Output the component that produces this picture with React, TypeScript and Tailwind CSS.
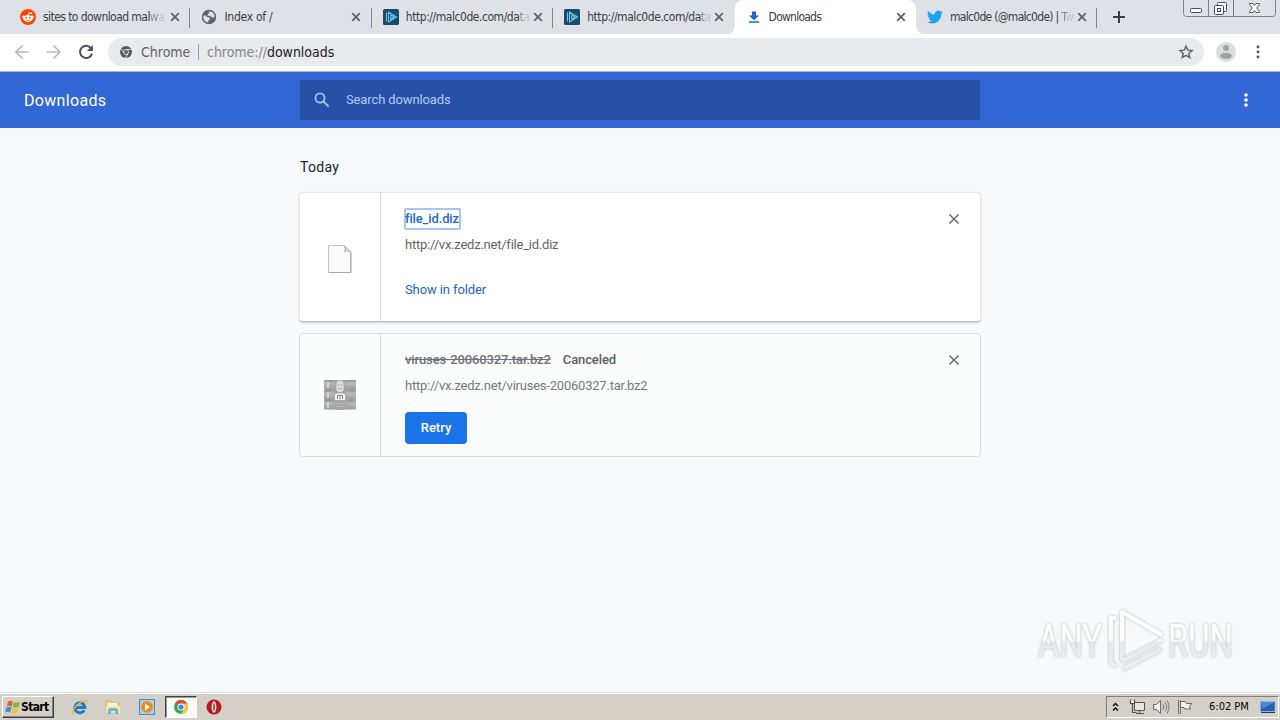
import React from 'react';
import clsx from 'clsx';

interface Tab {
  title: string;
  icon: React.ElementType;
  active?: boolean;
  fade?: boolean;
  divider?: boolean;
  text: string;
}

const RedditIcon = () => (
  <svg width="16" height="16" viewBox="0 0 16 16">
    <circle cx="8" cy="8" r="8" fill="#ff4500" />
    <path d="M8 7.2l.6-3.4 2.4.6" fill="none" stroke="#fff" strokeWidth="0.8" />
    <circle cx="11.2" cy="4.3" r="1" fill="#fff" />
    <circle cx="3.6" cy="8" r="1.4" fill="#fff" />
    <circle cx="12.4" cy="8" r="1.4" fill="#fff" />
    <ellipse cx="8" cy="9.4" rx="4.7" ry="3.5" fill="#fff" />
    <circle cx="6.1" cy="8.7" r="0.9" fill="#ff4500" />
    <circle cx="9.9" cy="8.7" r="0.9" fill="#ff4500" />
    <path d="M6 10.8c1.2.9 2.8.9 4 0" fill="none" stroke="#ff4500" strokeWidth="0.7" />
  </svg>
);

const GlobeIcon = () => (
  <svg width="16" height="16" viewBox="0 0 16 16">
    <circle cx="8" cy="8" r="7" fill="#5f6368" />
    <path d="M1.8 6.5h3l2 2h2v2l-1.5 1v2.2C4.3 13.4 2 11 1.8 6.5z" fill="#dfe3e8" />
    <path d="M7.5 2.2h3.200c2 1 3.200 2.900 3.200 5.300l-1.400 1.300-2-.8-1.500-1.300H6.500l.5-1.900 1.500-.6z" fill="#dfe3e8" />
    <circle cx="8" cy="8" r="6.5" fill="none" stroke="#5f6368" strokeWidth="1.3" />
  </svg>
);

const MalcodeIcon = () => (
  <svg width="16" height="16" viewBox="0 0 16 16">
    <rect width="16" height="16" rx="1.5" fill="#174b70" />
    <path d="M3.5 12V3.800M5.500 3v10l8-5zM7.700 6v4.200l3.400-2.200z" fill="none" stroke="#6fc6df" strokeWidth="1.1" strokeLinejoin="round" strokeLinecap="round" />
  </svg>
);

const DownloadIcon = () => (
  <svg width="16" height="16" viewBox="0 0 16 16">
    <path d="M6 2.500h4v4h3L8 11.200 3 6.500h3zM3 12.300h10.200v1.400H3z" fill="#1967d2" />
  </svg>
);

const TwitterIcon = () => (
  <svg width="16" height="16" viewBox="0 0 24 24">
    <path d="M23.95 4.57a10 10 0 0 1-2.82.78 4.96 4.96 0 0 0 2.16-2.73c-.95.56-2 .96-3.13 1.19a4.92 4.92 0 0 0-8.38 4.48A13.93 13.93 0 0 1 1.64 3.16a4.92 4.92 0 0 0 1.52 6.57 4.9 4.9 0 0 1-2.23-.62v.06a4.92 4.92 0 0 0 3.95 4.83 5 5 0 0 1-2.21.08 4.94 4.94 0 0 0 4.6 3.42A9.87 9.87 0 0 1 0 19.54a13.99 13.99 0 0 0 7.55 2.21c9.05 0 14-7.5 14-13.98l-.02-.64a9.94 9.94 0 0 0 2.42-2.56z" fill="#1da1f2" />
  </svg>
);

const CloseIcon = ({ size = 10, color = '#5f6368', stroke = 1.8 }) => (
  <svg width={size} height={size} viewBox="0 0 10 10">
    <path d="M1.2 1.200l7.600 7.600M8.800 1.200L1.200 8.800" stroke={color} strokeWidth={stroke} />
  </svg>
);

const tabs: Tab[] = [
  { title: 'sites to download malwa', icon: RedditIcon, fade: true, divider: true, text: 'tracking-[-0.56px]' },
  { title: 'Index of /', icon: GlobeIcon, divider: true, text: 'tracking-[-0.25px]' },
  { title: 'http://malc0de.com/data', icon: MalcodeIcon, fade: true, divider: true, text: 'tracking-[-0.45px]' },
  { title: 'http://malc0de.com/data', icon: MalcodeIcon, fade: true, text: 'tracking-[-0.45px]' },
  { title: 'Downloads', icon: DownloadIcon, active: true, text: 'tracking-[-0.75px]' },
  { title: 'malc0de (@malc0de) | Tw', icon: TwitterIcon, fade: true, divider: true, text: 'tracking-[-0.7px]' },
];

const TabStrip = () => (
  <div className="flex h-[34px] bg-[#dee1e6] pl-[9px]">
    {tabs.map((tab, i) => {
      const Icon = tab.icon;
      return (
        <div
          key={i}
          className={clsx(
            'relative flex h-[34px] w-[181.4px] shrink-0 items-center pl-[11px]',
            tab.active && 'rounded-t-lg bg-white'
          )}
        >
          <Icon />
          <span
            className={clsx(
              "ml-[7px] h-4 w-[119px] whitespace-nowrap font-['DejaVu_Sans_Condensed','DejaVu_Sans',sans-serif] text-[12px] leading-4 font-stretch-condensed text-[#3c4043]",
              tab.text
            )}
          >
            {tab.fade ? (
              <>
                {tab.title.slice(0, -2)}
                <span className="opacity-50">{tab.title.slice(-2, -1)}</span>
                <span className="opacity-20">{tab.title.slice(-1)}</span>
              </>
            ) : (
              tab.title
            )}
          </span>
          <span className="ml-2 flex"><CloseIcon /></span>
          {tab.divider && <span className="absolute top-[8px] right-0 h-5 w-px bg-[#80868b]" />}
          {tab.active && (
            <>
              <svg className="absolute bottom-0 -left-2" width="8" height="8" viewBox="0 0 8 8"><path d="M8 0v8H0a8 8 0 0 0 8-8z" fill="#fff" /></svg>
              <svg className="absolute -right-2 bottom-0" width="8" height="8" viewBox="0 0 8 8"><path d="M0 0v8h8a8 8 0 0 1-8-8z" fill="#fff" /></svg>
            </>
          )}
        </div>
      );
    })}
    <svg className="mt-[11px] ml-[16px] shrink-0" width="12" height="12" viewBox="0 0 12 12">
      <path d="M6 0v12M0 6h12" stroke="#3c4043" strokeWidth="2" />
    </svg>
    <svg className="ml-[58px] shrink-0" width="93" height="17" viewBox="0 0 93 17">
      <path d="M.5 0v13.500q0 3 3 3h86q3 0 3-3V0M25.500 0v16M50.500 0v16" fill="none" stroke="#7c828a" />
      <g fill="#f8f9fb" stroke="#454a54">
        <rect x="7.5" y="8.5" width="11" height="4" rx="1" />
        <rect x="34.5" y="2.5" width="9" height="9" rx="1" />
        <rect x="31.5" y="5.5" width="9" height="9" rx="1" />
        <rect x="34.5" y="8.5" width="3" height="3" />
        <path d="M66.500 3.500h3.500l1.500 2 1.500-2h3.500v1l-2.800 3.500 2.800 3.500v1H73l-1.500-2-1.500 2h-3.500v-1l2.800-3.500-2.800-3.500z" strokeWidth="0.9" />
      </g>
    </svg>
  </div>
);

const Toolbar = () => (
  <div className="flex h-[38px] items-center border-b border-[#9db9d8] bg-white pb-px pl-[15px]">
    <svg width="86" height="16" viewBox="0 0 86 16" fill="none" strokeWidth="1.7">
      <path d="M14 8H1M7.500 1.500L1 8l6.500 6.500M32 8h13M38.500 1.500L45 8l-6.500 6.500" stroke="#babcbe" />
      <path d="M76.200 4.500A6.100 6.100 0 1 0 77 9.600" stroke="#505357" strokeWidth="2" />
      <path d="M77.900 1v6h-6z" fill="#505357" />
    </svg>
    <div className="ml-[7px] flex h-7 w-[1096px] items-center rounded-full bg-[#e8eaed] pl-3 font-['DejaVu_Sans_Condensed','DejaVu_Sans',sans-serif] text-[14px] text-[#5f6368] font-stretch-condensed">
      <svg width="12" height="12" viewBox="0 0 12 12">
        <circle cx="6" cy="6" r="6" fill="#55595d" />
        <circle cx="6" cy="6" r="2.5" fill="none" stroke="#e8eaed" strokeWidth="0.9" />
        <path d="M6 3.500h5.400M3.800 7.200L1.100 2.600M8.200 7.200L5.500 12" stroke="#e8eaed" strokeWidth="0.8" />
      </svg>
      <span className="ml-[9px] w-[49px] whitespace-nowrap">Chrome</span>
      <span className="ml-2 h-4 w-px bg-[#9aa0a6]" />
      <span className="ml-[8px] whitespace-nowrap tracking-[-0.03px] text-[#80868b]">
        chrome://<span className="text-[#202124]">downloads</span>
      </span>
      <svg className="mr-[10px] ml-auto" width="16" height="16" viewBox="0 0 24 24">
        <path d="M12 3.200l2.700 6 6.400.6-4.900 4.300 1.500 6.300-5.700-3.400-5.700 3.400 1.500-6.300-4.900-4.300 6.400-.6z" fill="none" stroke="#5f6368" strokeWidth="2.2" />
      </svg>
    </div>
    <svg className="ml-3" width="20" height="20" viewBox="0 0 20 20">
      <circle cx="10" cy="10" r="10" fill="#dcdddf" />
      <circle cx="10" cy="6" r="3" fill="#a2a2a2" />
      <ellipse cx="10" cy="13.8" rx="6" ry="3" fill="#a2a2a2" />
    </svg>
    <svg className="ml-[20px]" width="4" height="14" viewBox="0 0 4 14" fill="#505357">
      <circle cx="2" cy="2" r="1.4" /><circle cx="2" cy="7" r="1.4" /><circle cx="2" cy="12" r="1.4" />
    </svg>
  </div>
);

const PageHeader = () => (
  <header className="flex h-14 items-center bg-[#3367d6] pl-6">
    <h1 className="w-[276px] pt-px text-base tracking-[0.32px] text-white">Downloads</h1>
    <div className="flex h-10 w-[680px] items-center bg-[#2850a7] pl-[14px]">
      <svg width="16" height="16" viewBox="0 0 16 16" fill="none" stroke="#a9c3f5" strokeWidth="1.8">
        <circle cx="6" cy="6" r="4.6" />
        <path d="M9.500 9.500l5 5" />
      </svg>
      <span className="ml-4 text-[13px] tracking-[-0.12px] text-[#b4caf6]">Search downloads</span>
    </div>
    <svg className="ml-[264px]" width="4" height="14" viewBox="0 0 4 14" fill="#fff">
      <circle cx="2" cy="2" r="1.8" /><circle cx="2" cy="7" r="1.8" /><circle cx="2" cy="12" r="1.8" />
    </svg>
  </header>
);

const FileIcon = () => (
  <svg width="26" height="30" viewBox="0 0 26 30">
    <path d="M1.500 1.500H17l6.500 6.500v20.500h-22z" fill="#fbfbfb" stroke="#c4c4c4" />
    <path d="M2 28.500h22V8" fill="none" stroke="#a6a6a6" />
    <path d="M17 1.500c1.500 2 1.500 4 .5 6 2-.8 4-.6 6 .5z" fill="#e4e4e4" stroke="#a0a0a0" strokeWidth="0.8" />
  </svg>
);

const ArchiveIcon = () => (
  <svg width="32" height="32" viewBox="0 0 32 32">
    <defs>
      <linearGradient id="book" x1="0" y1="0" x2="0" y2="1">
        <stop offset="0" stopColor="#929292" />
        <stop offset="0.35" stopColor="#bababa" />
        <stop offset="1" stopColor="#9a9a9a" />
      </linearGradient>
    </defs>
    <rect x="0" y="1" width="32" height="10" rx="1" fill="url(#book)" />
    <rect x="0" y="11" width="32" height="10" rx="1" fill="url(#book)" />
    <rect x="0" y="21" width="32" height="9.5" rx="1" fill="url(#book)" />
    <path d="M4 3v6M4 13v6M4 23v6" stroke="#dedede" strokeWidth="1.5" />
    <path d="M9 1.500v28.500M23 1.500v28.500" stroke="#a9a9a9" />
    <rect x="11" y="1" width="10" height="30" rx="1" fill="#a5a5a5" />
    <rect x="12" y="1.5" width="8" height="12" rx="3.5" fill="#dedede" stroke="#a2a2a2" strokeWidth="0.7" />
    <path d="M13.500 6h2M16.500 6h2M14 9.500h4" stroke="#aaa" />
    <path d="M12 24.500h8M12 27.500h8" stroke="#b9b9b9" />
    <path d="M12 14h8l1.500 2v5.500h-11V16z" fill="#f4f4f4" stroke="#999" strokeWidth="0.7" />
    <path d="M13.500 20v-3.500h5V20M16 16.500v4" fill="none" stroke="#888" />
  </svg>
);

const DownloadsList = () => (
  <main className="h-[565px] bg-[#f7fafc] pt-[29px] pl-[299px]">
    <h2 className="ml-px text-sm leading-5 tracking-[0.3px] text-[#202124]">Today</h2>
    <div className="mt-[15px] flex h-[130px] w-[682px] rounded border border-[#e4e6e8] border-b-[#bfc1c3] bg-white shadow-[0_1px_2px_rgba(60,64,67,0.22)]">
      <div className="flex w-[81px] items-center justify-center border-r border-[#dadce0] pt-[3px]">
        <FileIcon />
      </div>
      <div className="flex flex-col items-start pt-[15px] pl-6 text-[13px] leading-[18px]">
        <a className="-ml-px h-[22px] rounded-[2px] border-2 border-[#a8c5f2] bg-white text-[13px] leading-[18px] font-medium tracking-[-0.14px] text-[#2467ca] -indent-px">file_id.diz</a>
        <span className="mt-[6px] tracking-[-0.23px] text-[#5f6368]">http://vx.zedz.net/file_id.diz</span>
        <a className="mt-[27px] tracking-[-0.1px] text-[#1c65c6]">Show in folder</a>
      </div>
      <span className="mt-[20px] mr-[20px] ml-auto"><CloseIcon size={12} stroke={1.1} /></span>
    </div>
    <div className="mt-[11px] flex h-[124px] w-[682px] rounded border border-[#dadcde] bg-[#fbfdfd]">
      <div className="flex w-[81px] items-center justify-center border-r border-[#dadce0]">
        <ArchiveIcon />
      </div>
      <div className="flex flex-col items-start pt-[17px] pl-6 text-[13px] leading-[18px]">
        <div className="flex gap-3 font-medium">
          <span className="tracking-[-0.13px] whitespace-nowrap text-[#6e7175] line-through">viruses-20060327.tar.bz2</span>
          <span className="tracking-[-0.1px] text-[#5a5d61]">Canceled</span>
        </div>
        <span className="mt-[8px] tracking-[-0.22px] text-[#75787c]">http://vx.zedz.net/viruses-20060327.tar.bz2</span>
        <button className="mt-[17px] h-8 w-[62px] rounded bg-[#1a73e8] text-[13px] leading-8 font-medium text-white">Retry</button>
      </div>
      <span className="mt-[20px] mr-[20px] ml-auto"><CloseIcon size={12} stroke={1.1} /></span>
    </div>
  </main>
);

const Watermark = () => (
  <svg className="absolute top-[600px] left-[1030px]" width="230" height="80" viewBox="0 0 230 80">
    <defs>
      <linearGradient id="wm" gradientUnits="userSpaceOnUse" x1="0" y1="20" x2="0" y2="62">
        <stop offset="0" stopColor="#fff" />
        <stop offset="0.48" stopColor="#fff" />
        <stop offset="0.52" stopColor="#e7e9ea" />
        <stop offset="1" stopColor="#eceeef" />
      </linearGradient>
      <filter id="wmShadow" x="-20%" y="-20%" width="140%" height="140%">
        <feDropShadow dx="0" dy="0" stdDeviation="1.5" floodColor="#777" floodOpacity="0.55" />
      </filter>
    </defs>
    <g filter="url(#wmShadow)">
      <text x="8" y="57" textLength="64" lengthAdjust="spacingAndGlyphs" fontFamily="Roboto, sans-serif" fontSize="47" fill="url(#wm)">ANY</text>
      <text x="138" y="57" textLength="65" lengthAdjust="spacingAndGlyphs" fontFamily="Roboto, sans-serif" fontSize="47" fill="url(#wm)">RUN</text>
      <path d="M86 18h-5v45l6 3M92 61V12l40 23M92 61l40-21M93 69l38-20" fill="none" stroke="url(#wm)" strokeWidth="4" strokeLinejoin="round" />
    </g>
  </svg>
);

const StartFlag = () => (
  <svg width="16" height="15" viewBox="0 0 16 15">
    <path d="M3 1.500q2.500-1.500 5 0L6.800 6.500q-2.300-1.300-5 0z" fill="#e8632c" />
    <path d="M9 2q2.500 1.400 6 0l-1.400 5q-2.800 1.300-5.800 0z" fill="#79b543" />
    <path d="M1.500 7.500q2.700-1.300 5 0l-1.300 5q-2.500-1.300-5 0z" fill="#3f8fd8" />
    <path d="M7.500 8q2.800 1.400 6 0l-1.400 5q-2.800 1.300-5.900 0z" fill="#f6c332" />
  </svg>
);

const Taskbar = () => (
  <footer className="flex h-[27px] items-center border-t border-white bg-[#d4d0c8] pl-[2px] outline-1 outline-[#dedcd8]">
    <div className="flex h-[22px] w-[52px] items-center border border-t-white border-r-[#404040] border-b-[#404040] border-l-white pl-[2px] shadow-[inset_-1px_-1px_#808080]">
      <StartFlag />
      <span className="font-['DejaVu_Sans_Condensed','DejaVu_Sans',sans-serif] text-[12px] font-bold tracking-[-0.65px] text-black font-stretch-condensed">Start</span>
    </div>
    <svg className="ml-[17px]" width="18" height="17" viewBox="0 0 17 17">
      <path d="M12.800 11.200A5 5 0 1 1 13.400 8.500H4" fill="none" stroke="#2478c4" strokeWidth="3" />
      <path d="M2 15C-1 14 3 7 9 3.500c4-2.500 7.500-2.800 6 1" fill="none" stroke="#edbd37" strokeWidth="1.4" />
    </svg>
    <svg className="ml-[16px]" width="16" height="16" viewBox="0 0 16 16">
      <path d="M1 2h5l1 2h7v10H1z" fill="#f4d675" stroke="#c8a947" strokeWidth="0.7" />
      <path d="M3 4h9v3H3z" fill="#fff9dc" />
      <path d="M1 7h14v7H1z" fill="#f8e8a3" />
      <path d="M3 15v-4q0-2 2-2h6q2 0 2 2v4h-3v-3H6v3z" fill="#69b9df" />
    </svg>
    <svg className="ml-[18px]" width="16" height="16" viewBox="0 0 16 16">
      <rect x="0.5" y="0.5" width="15" height="15" fill="#a9cfe9" stroke="#4e8cba" />
      <circle cx="8" cy="8" r="5.8" fill="#ef851c" />
      <path d="M6 4.500v7l5-3.500z" fill="#fff" />
    </svg>
    <div className="ml-[10px] flex h-[22px] w-[32px] items-center justify-center border border-t-[#404040] border-r-white border-b-white border-l-[#404040] bg-[#fbfaf9] shadow-[inset_1px_1px_#999]">
      <svg width="14" height="14" viewBox="0 0 14 14">
        <circle cx="7" cy="7" r="7" fill="#34a853" />
        <path d="M7 7L.9 3.500A7 7 0 0 1 13.100 3.500z" fill="#df4935" />
        <path d="M7 3.500h6.100A7 7 0 0 1 7 14l3-5z" fill="#fbc934" />
        <circle cx="7" cy="7" r="3.5" fill="#fff" />
        <circle cx="7" cy="7" r="2.6" fill="#4285f4" />
      </svg>
    </div>
    <svg className="ml-[9px]" width="16" height="16" viewBox="0 0 16 16">
      <circle cx="8" cy="8" r="7.5" fill="#b9181e" />
      <ellipse cx="8" cy="8" rx="2.4" ry="5.8" fill="#f4e8e4" />
      <ellipse cx="8" cy="8" rx="0.7" ry="4" fill="#8b1013" />
    </svg>
    <div className="mr-px ml-auto flex h-[22px] w-[173px] items-center border border-t-[#808080] border-r-white border-b-white border-l-[#808080] pl-[5px]">
      <svg width="7" height="10" viewBox="0 0 7 10">
        <path d="M1 4l2.500-2.500L6 4M1 8.500L3.500 6 6 8.500" fill="none" stroke="#111" strokeWidth="1.5" />
      </svg>
      <svg className="ml-[10px]" width="17" height="16" viewBox="0 0 17 16">
        <path d="M5.500 3.500h10v8h-10z" fill="#e8e6e2" stroke="#555" />
        <path d="M7 14.500h8M10.500 12v2" stroke="#555" />
        <path d="M1.500.5v4h4v-4M3.500 4.500v9h4" fill="none" stroke="#555" strokeWidth="1.2" />
        <path d="M2.500 2h2v2h-2z" fill="#fff" />
      </svg>
      <svg className="ml-[7px]" width="17" height="16" viewBox="0 0 17 16">
        <path d="M.6 5.500h3l4-4v13l-4-4h-3z" fill="#f4f3f1" stroke="#666" />
        <path d="M10 5.500q1.800 2.500 0 5M12 3.500q3.500 4.500 0 9M14 1.500q4.200 6.500 0 13" fill="none" stroke="#777" />
      </svg>
      <svg className="ml-[7px]" width="16" height="16" viewBox="0 0 16 16">
        <path d="M1.500 1v14M3.500 1v14" stroke="#666" strokeWidth="0.9" />
        <path d="M3.500 2.500h5l1 2h5l-2 3 1 2.500H8l-1-1.500H3.500z" fill="#f6f5f3" stroke="#666" />
      </svg>
      <span className="ml-[16px] w-[42px] whitespace-nowrap font-['DejaVu_Sans_Condensed','DejaVu_Sans',sans-serif] text-[11px] text-black font-stretch-condensed">6:02 PM</span>
      <svg className="ml-[9px]" width="16" height="14" viewBox="0 0 16 14">
        <path d="M.5 1.500h14.500v10H.5z" fill="#2463b1" stroke="#92b9dc" strokeWidth="0.8" />
        <path d="M1 2h13.500L2 9z" fill="#4c8bd3" />
        <path d="M1 12.500h14" stroke="#203c66" />
      </svg>
    </div>
  </footer>
);

export default function App() {
  return (
    <div className="relative flex h-[720px] w-[1280px] flex-col overflow-hidden bg-white font-[Roboto,sans-serif]">
      <TabStrip />
      <Toolbar />
      <PageHeader />
      <DownloadsList />
      <Taskbar />
      <Watermark />
    </div>
  );
}
